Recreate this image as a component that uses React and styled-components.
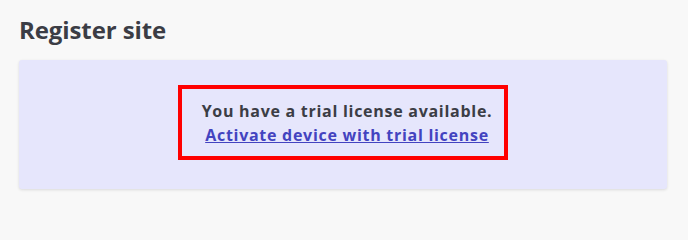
import React from "react";
import styled, { createGlobalStyle } from "styled-components";

const Global = createGlobalStyle`
  html, body { margin: 0; padding: 0; background: #f8f8f8; }
  body { font-family: "Open Sans", "Noto Sans", sans-serif; color: #3b3d45; }
`;

const Page = styled.div`
  padding: 14px 21px 15px 19px;
`;

const Title = styled.h2`
  margin: 0 0 14px 0;
  font-family: "Open Sans", sans-serif;
  font-size: 24px;
  font-weight: 700;
  line-height: 32px;
  letter-spacing: -0.1px;
  color: #3b3d45;
`;

const Card = styled.div`
  background: #e6e6fc;
  border-radius: 3px;
  box-shadow: 0 1px 3px rgba(0, 0, 0, 0.12);
  padding: 25px 0 29px;
  display: flex;
  justify-content: center;
`;

const Highlight = styled.div`
  border: 4px solid #ff0000;
  padding: 10px 12px 9px 20px;
  display: flex;
  flex-direction: column;
  align-items: center;
  text-align: center;
`;

const Message = styled.div`
  font-size: 16px;
  font-weight: 700;
  line-height: 24px;
  letter-spacing: 0.72px;
  color: #3b3d45;
`;

const Link = styled.a`
  font-size: 16px;
  font-weight: 700;
  line-height: 24px;
  letter-spacing: 0.72px;
  color: #4343c0;
  text-decoration: underline;
  cursor: pointer;
`;

export default function App() {
  return (
    <>
      <Global />
      <Page>
        <Title>Register site</Title>
        <Card>
          <Highlight>
            <Message>You have a trial license available.</Message>
            <Link href="#">Activate device with trial license</Link>
          </Highlight>
        </Card>
      </Page>
    </>
  );
}
